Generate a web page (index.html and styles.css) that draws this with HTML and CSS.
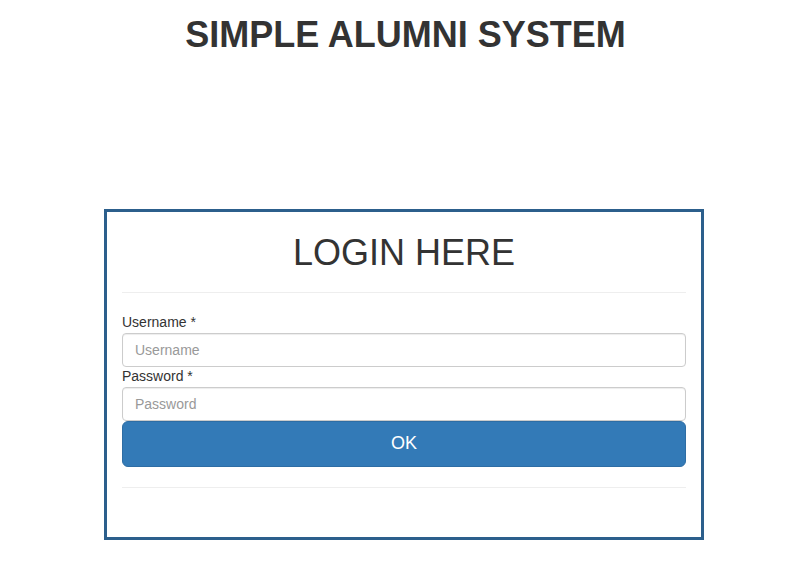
FILE: index.html
```html
<!DOCTYPE html>
<html lang="en">
<head>
    <meta charset="UTF-8">
    <meta name="viewport" content="width=device-width, initial-scale=1.0">
    <title>Simple Alumni System</title>
    <link rel="stylesheet" href="styles.css">
</head>
<body>
    <header>
        <h1>SIMPLE ALUMNI SYSTEM</h1>
    </header>

    <div class="login-box">
        <h2>LOGIN HERE</h2>
        <hr>
        <form id="loginForm">
            <label for="username">Username *</label>
            <input type="text" id="username" name="username" placeholder="Username" required>

            <label for="password">Password *</label>
            <input type="password" id="password" name="password" placeholder="Password" required>

            <button type="submit">OK</button>
        </form>
        <hr>
    </div>
</body>
</html>
```

FILE: styles.css
```css
body {
    font-family: "Liberation Sans", Arial, Helvetica, sans-serif;
    font-size: 14px;
    line-height: 1.42857;
    margin: 0;
    padding: 0;
    background-color: #ffffff;
    color: #333333;
}

header {
    text-align: center;
    padding-top: 15px;
}

header h1 {
    margin: 0;
    font-size: 36px;
    font-weight: bold;
    line-height: 1.1;
}

.login-box {
    width: 600px;
    box-sizing: border-box;
    margin: 154px auto 0 104px;
    border: 3px solid #2c5f8c;
    padding: 21px 15px 49px;
}

.login-box h2 {
    margin: 0;
    text-align: center;
    font-size: 36px;
    font-weight: normal;
    line-height: 1.1;
}

hr {
    border: 0;
    border-top: 1px solid #eeeeee;
    margin: 20px 0 0;
}

form {
    margin-top: 20px;
    margin-bottom: 20px;
}

label {
    display: block;
    font-weight: normal;
}

input {
    display: block;
    width: 100%;
    height: 34px;
    box-sizing: border-box;
    padding: 6px 12px;
    font-family: inherit;
    font-size: 14px;
    color: #555555;
    border: 1px solid #cccccc;
    border-radius: 4px;
    box-shadow: inset 0 1px 1px rgba(0, 0, 0, 0.075);
    outline: none;
}

input::placeholder {
    color: #999999;
}

button {
    display: block;
    width: 100%;
    height: 46px;
    padding: 10px 16px;
    font-family: inherit;
    font-size: 18px;
    line-height: 1.3333;
    color: #ffffff;
    background-color: #337ab7;
    border: 1px solid #2e6da4;
    border-radius: 6px;
    cursor: pointer;
}

button:hover {
    background-color: #286090;
}
```
